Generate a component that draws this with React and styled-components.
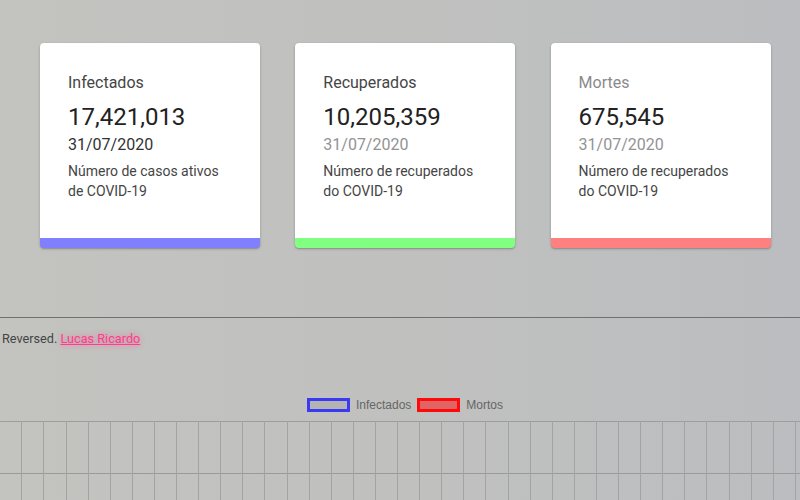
import React from 'react'
import styled, { createGlobalStyle } from 'styled-components'

const GlobalStyle = createGlobalStyle`
    html, body {
        margin: 0;
        padding: 0;
    }
    body {
        font-family: Roboto, "Liberation Sans", sans-serif;
        background: linear-gradient(to right, #c3c4c0, #c0c1bf 50%, #bbbdc0);
        min-height: 500px;
        overflow: hidden;
    }
`

const cards = [
    { title: 'Infectados', value: '17,421,013', date: '31/07/2020', text: 'Número de casos ativos de COVID-19', color: '#8080ff', muted: false },
    { title: 'Recuperados', value: '10,205,359', date: '31/07/2020', text: 'Número de recuperados do COVID-19', color: '#80ff80', muted: false, dateMuted: true },
    { title: 'Mortes', value: '675,545', date: '31/07/2020', text: 'Número de recuperados do COVID-19', color: '#ff8080', muted: true, dateMuted: true },
]

const App = () => {
    const ticks = Array.from({ length: 37 }, (_, i) => 21.3 + i * 22.1)

    return (
        <Page>
            <GlobalStyle />
            <CardRow>
                {cards.map(c => (
                    <Card key={c.title} stripe={c.color}>
                        <Title muted={c.muted}>{c.title}</Title>
                        <Value>{c.value}</Value>
                        <DateText muted={c.dateMuted}>{c.date}</DateText>
                        <Desc>{c.text}</Desc>
                    </Card>
                ))}
            </CardRow>
            <Divider />
            <Credits>
                Reversed. <a href="#">Lucas Ricardo</a>
            </Credits>
            <Legend>
                <LegendItem>
                    <Swatch border="#3a3af5" fill="rgba(170,170,170,0.6)" />
                    Infectados
                </LegendItem>
                <LegendItem>
                    <Swatch border="#ff0a0a" fill="#e06464" />
                    Mortos
                </LegendItem>
            </Legend>
            <Chart width="800" height="80">
                <line x1="0" x2="800" y1="0.5" y2="0.5" stroke="#9d9e9b" />
                <line x1="0" x2="800" y1="52.5" y2="52.5" stroke="#9a9b98" />
                {ticks.map(x => (
                    <line key={x} x1={Math.round(x) + 0.5} x2={Math.round(x) + 0.5} y1="0" y2="80" stroke="#a3a4a1" />
                ))}
            </Chart>
        </Page>
    )
}

export default App

const Page = styled.div`
    width: 800px;
    height: 500px;
    display: flex;
    flex-direction: column;
`

const CardRow = styled.div`
    display: flex;
    gap: 35.3px;
    padding: 43px 0 0 40px;
`

const Card = styled.div`
    width: 220px;
    height: 205px;
    box-sizing: border-box;
    background: #fff;
    border-radius: 4px;
    overflow: hidden;
    padding: 28px 28px 0;
    box-shadow: 0 1px 3px rgba(0,0,0,.2), 0 1px 1px rgba(0,0,0,.12);
    border-bottom: 10px solid ${props => props.stripe};
    display: flex;
    flex-direction: column;
`

const Title = styled.div`
    font-size: 16px;
    line-height: 24px;
    color: ${props => props.muted ? '#8a8a8a' : '#454545'};
`

const Value = styled.div`
    font-size: 24px;
    line-height: 28px;
    margin-top: 8px;
    color: #222;
`

const DateText = styled.div`
    font-size: 16px;
    line-height: 24px;
    margin-top: 2px;
    color: ${props => props.muted ? '#939393' : '#333'};
`

const Desc = styled.div`
    font-size: 14px;
    line-height: 19.5px;
    margin-top: 5px;
    color: #454545;
`

const Divider = styled.div`
    height: 1px;
    background: #707070;
    margin-top: 69px;
`

const Credits = styled.div`
    font-size: 12.7px;
    line-height: 16px;
    color: #444;
    padding: 13px 0 0 2px;
    a{
        color: #ff3d8c;
        text-shadow: 0 0 6px rgba(255, 60, 140, .6);
    }
`

const Legend = styled.div`
    display: flex;
    justify-content: center;
    gap: 6px;
    margin-top: 50px;
    padding-left: 10px;
    font-family: "Liberation Sans", Arial, sans-serif;
    font-size: 12px;
    color: #666;
`

const LegendItem = styled.div`
    display: flex;
    align-items: center;
    gap: 6px;
    line-height: 16px;
`

const Swatch = styled.span`
    width: 43px;
    height: 14px;
    box-sizing: border-box;
    border: 3px solid ${props => props.border};
    background: ${props => props.fill};
`

const Chart = styled.svg`
    display: block;
    margin-top: 8px;
`
